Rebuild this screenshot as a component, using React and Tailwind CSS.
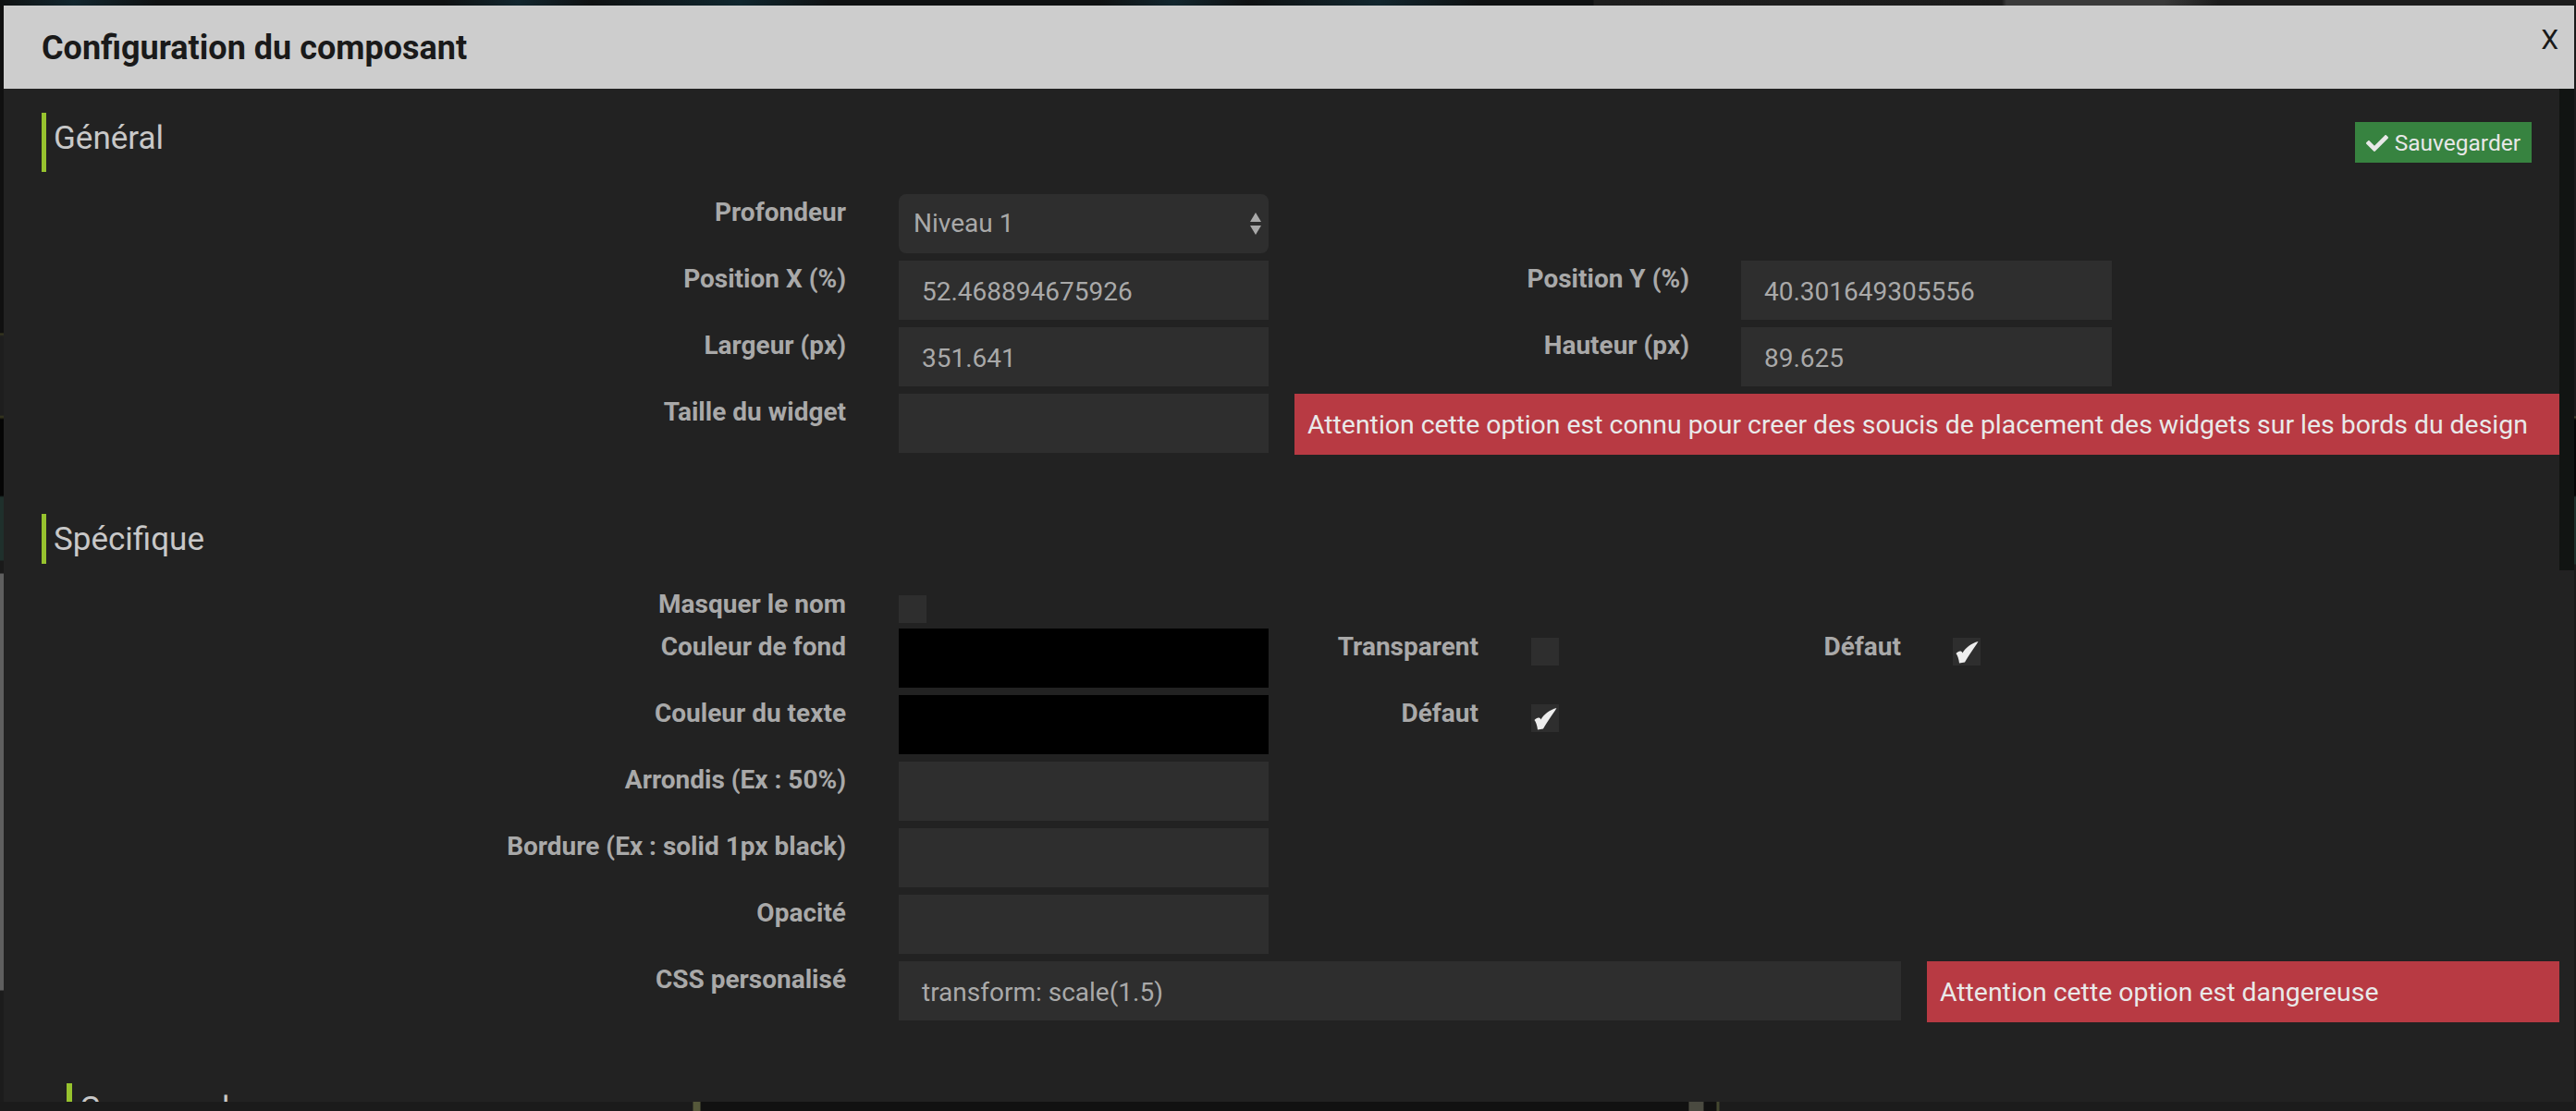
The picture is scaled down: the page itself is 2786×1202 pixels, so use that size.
import { FaCheck } from 'react-icons/fa'

const Label = ({ children, className = '' }) => (
  <div className={`shrink-0 text-right text-[28px] leading-[40px] font-bold text-[#a9a9a9] ${className}`}>
    {children}
  </div>
)

const Field = ({ value, className = 'w-[400px]' }) => (
  <div className={`flex h-16 shrink-0 items-center bg-[#2e2e2e] pt-1 pl-[25px] text-[28px] text-[#a9a9a9] ${className}`}>
    {value}
  </div>
)

const ColorField = () => <div className="h-16 w-[400px] shrink-0 bg-black" />

const Check = ({ checked, className = '' }) => (
  <div className={`h-[30px] w-[30px] shrink-0 bg-[#2e2e2e] ${className}`}>
    {checked && (
      <svg width="30" height="30" viewBox="0 0 30 30" fill="#eeeeee">
        <path d="M27.5 4C24 10 17 19 13 26.5L7 27.5C6.5 23 5 19 3.5 17C6 14 9.5 13.5 10.5 16.5C14 10.5 20 6 27.5 4Z" />
      </svg>
    )}
  </div>
)

const Warning = ({ children, className = '' }) => (
  <div className={`flex h-[66px] items-center bg-[#b83a43] pt-[3px] pl-[14px] text-[28.4px] text-[#e9e9e9] ${className}`}>
    {children}
  </div>
)

const Heading = ({ children, className = 'h-[54px] pt-[2px]' }) => (
  <div className={`flex items-center border-l-[5px] border-[#97c32e] pl-2 text-[35px] text-[#c8c8c8] ${className}`}>
    {children}
  </div>
)

const Row = ({ label, children }) => (
  <div className="flex items-start">
    <Label className="w-[870px]">{label}</Label>
    <div className="ml-[57px] flex min-w-0 flex-1 items-start">{children}</div>
  </div>
)

export default function App() {
  return (
    <div className="flex h-[1202px] w-[2786px] flex-col overflow-hidden bg-[#111111] font-['Roboto',sans-serif]">
      {/* what shows of the page behind the modal */}
      <div className="h-[6px] shrink-0 bg-[linear-gradient(90deg,#0f1112_0px,#12262e_80px,#0f1112_170px,#0f1112_480px,#12262e_560px,#0f1112_640px,#10262e_800px,#0f1112_900px,#0f1112_1190px,#12262e_1270px,#0f1112_1350px,#12262e_1490px,#0f1112_1600px,#0f1112_1723px,#1e1e1e_1724px,#1c1c1c_2165px,#3a3a3a_2170px,#3a3a3a_2340px,#1c1c1c_2400px)]" />

      <div className="flex min-h-0 flex-1">
        <div className="w-1 shrink-0 bg-[linear-gradient(180deg,#101010_0px,#101010_354px,#3a3a20_355px,#1e1e1e_358px,#1e1e1e_443px,#3a3a20_445px,#050505_448px,#050505_530px,#1f302c_532px,#1f302c_600px,#1a1a1a_601px,#1a1a1a_614px,#5f5f5f_615px,#5f5f5f_1065px,#1c1c1c_1066px)]" />

        <div className="flex min-w-0 flex-1 flex-col">
          <div className="flex h-[90px] shrink-0 items-start justify-between bg-[#cdcdcd] text-[#1a1a1a]">
            <h1 className="pt-[22px] pl-[41px] text-[36px] leading-[48px] font-bold">Configuration du composant</h1>
            <button className="pt-4 pr-[17px] text-[30px] leading-[42px]">X</button>
          </div>

          <div className="flex min-h-0 flex-1 bg-[#222222]">
            <div className="min-w-0 flex-1 overflow-hidden pt-[26px] pl-[41px]">
              <div className="flex items-center justify-between pr-[30px]">
                <Heading className="h-16 pb-2">Général</Heading>
                <button className="flex h-11 items-center gap-[7px] bg-[#378340] px-3 pt-[2px] text-[24.5px] text-[#e8e8e8]">
                  <FaCheck size={24} />
                  Sauvegarder
                </button>
              </div>

              <div className="mt-6 flex flex-col gap-2">
                <Row label="Profondeur">
                  <div className="flex h-16 w-[400px] shrink-0 items-center justify-between rounded-lg bg-[#2e2e2e] pr-2 pl-4 text-[28px] text-[#a9a9a9]">
                    Niveau 1
                    <svg width="12" height="24" viewBox="0 0 12 24" fill="#a9a9a9">
                      <path d="M6 0 12 10H0Z" />
                      <path d="M0 14H12L6 24Z" />
                    </svg>
                  </div>
                </Row>
                <Row label="Position X (%)">
                  <Field value="52.468894675926" />
                  <Label className="w-[455px]">Position Y (%)</Label>
                  <Field value="40.301649305556" className="ml-14 w-[401px]" />
                </Row>
                <Row label="Largeur (px)">
                  <Field value="351.641" />
                  <Label className="w-[455px]">Hauteur (px)</Label>
                  <Field value="89.625" className="ml-14 w-[401px]" />
                </Row>
                <Row label="Taille du widget">
                  <Field value="" />
                  <Warning className="ml-7 flex-1">
                    Attention cette option est connu pour creer des soucis de placement des widgets sur les bords du design
                  </Warning>
                </Row>
              </div>

              <Heading className="mt-16 h-[54px] pt-[2px]">Spécifique</Heading>

              <div className="mt-6 flex flex-col">
                <Row label="Masquer le nom">
                  <Check className="mt-[10px]" />
                </Row>
                <div className="mt-[6px] flex flex-col gap-2">
                  <Row label="Couleur de fond">
                    <ColorField />
                    <Label className="w-[227px]">Transparent</Label>
                    <Check className="mt-[10px] ml-[57px]" />
                    <Label className="w-[370px]">Défaut</Label>
                    <Check checked className="mt-[10px] ml-14" />
                  </Row>
                  <Row label="Couleur du texte">
                    <ColorField />
                    <Label className="w-[227px]">Défaut</Label>
                    <Check checked className="mt-[10px] ml-[57px]" />
                  </Row>
                  <Row label="Arrondis (Ex : 50%)">
                    <Field value="" />
                  </Row>
                  <Row label="Bordure (Ex : solid 1px black)">
                    <Field value="" />
                  </Row>
                  <Row label="Opacité">
                    <Field value="" />
                  </Row>
                  <Row label="CSS personalisé">
                    <Field value="transform: scale(1.5)" className="w-[1084px]" />
                    <Warning className="ml-7 flex-1">Attention cette option est dangereuse</Warning>
                  </Row>
                </div>
              </div>

              <Heading className="mt-[66px] ml-[27px] h-[54px] border-l-[6px] pt-[2px]">Commandes</Heading>
            </div>

            <div className="w-4 shrink-0">
              <div className="h-[521px] bg-[#111412]" />
            </div>
          </div>
        </div>

        <div className="w-[2px] shrink-0 bg-[linear-gradient(180deg,#1a1a1a_0px,#1a1a1a_444px,#4a4a30_445px,#050505_448px,#050505_530px,#1f302c_532px,#1f302c_604px,#1a1a1a_605px)]" />
      </div>

      <div className="h-[10px] shrink-0 bg-[linear-gradient(90deg,#1b1b1b_0px,#1b1b1b_749px,#55583a_750px,#55583a_757px,#111111_758px,#111111_1826px,#4a4a40_1827px,#4a4a40_1842px,#111111_1843px,#111111_1856px,#44472f_1857px,#44472f_1859px,#1c1c1c_1860px)]" />
    </div>
  )
}
